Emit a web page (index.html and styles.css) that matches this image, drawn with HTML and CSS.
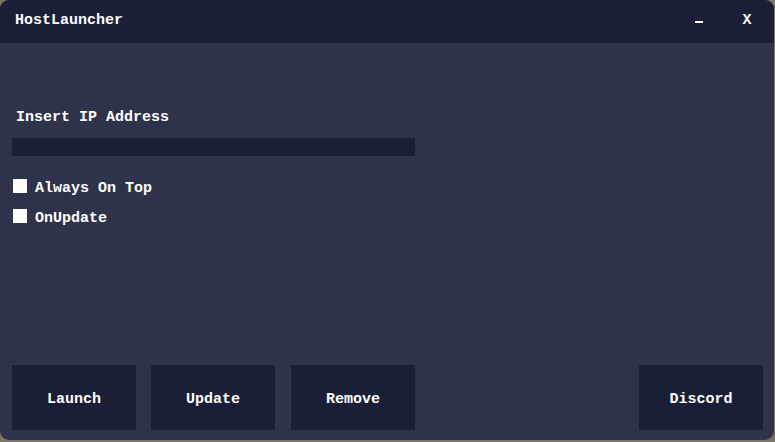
FILE: index.html
```html
<!DOCTYPE html>
<html>
<head>
<meta charset="utf-8">
<link rel="stylesheet" href="styles.css">
</head>
<body>
<div class="window">
  <div class="titlebar">
    <span class="title">HostLauncher</span>
    <div class="controls">
      <span class="min"></span>
      <span class="close">X</span>
    </div>
  </div>
  <div class="content">
    <div class="label">Insert IP Address</div>
    <div class="input"></div>
    <label class="check"><span class="box"></span><span class="text">Always On Top</span></label>
    <label class="check"><span class="box"></span><span class="text">OnUpdate</span></label>
  </div>
  <div class="buttons">
    <div class="btn">Launch</div>
    <div class="btn">Update</div>
    <div class="btn">Remove</div>
    <div class="btn discord">Discord</div>
  </div>
</div>
</body>
</html>
```
FILE: styles.css
```css
html, body {
  margin: 0;
  padding: 0;
  background: #7a7468;
  width: 775px;
  height: 442px;
  overflow: hidden;
}
.window {
  width: 774px;
  height: 440px;
  background: #2f3349;
  border-radius: 9px;
  overflow: hidden;
  display: flex;
  flex-direction: column;
  font-family: "Liberation Mono", "DejaVu Sans Mono", monospace;
  font-weight: bold;
  font-size: 15px;
  color: #ffffff;
}
.titlebar {
  height: 43px;
  background: #1b1e37;
  display: flex;
  align-items: center;
  justify-content: space-between;
  padding: 0 0 3px 15px;
  box-sizing: border-box;
}
.controls {
  display: flex;
  align-items: center;
}
.min {
  width: 8px;
  height: 2px;
  background: #ffffff;
  margin: 3px 39px 0 0;
}
.close {
  width: 10px;
  text-align: center;
  margin-right: 22px;
}
.content {
  padding: 66px 0 0 12px;
  display: flex;
  flex-direction: column;
}
.label {
  padding-left: 4px;
  line-height: 17px;
}
.input {
  margin-top: 12px;
  width: 403px;
  height: 18px;
  background: #1b1e37;
}
.check {
  display: flex;
  align-items: flex-start;
  height: 14px;
  margin-left: 1px;
}
.text {
  line-height: 19px;
}
.input + .check {
  margin-top: 23px;
}
.check + .check {
  margin-top: 16px;
}
.box {
  width: 14px;
  height: 14px;
  background: #ffffff;
  margin-right: 8px;
}
.buttons {
  margin-top: auto;
  display: flex;
  gap: 15px;
  padding: 0 11px 10px 12px;
}
.btn {
  width: 124px;
  height: 65px;
  box-sizing: border-box;
  padding-top: 3px;
  background: #1b1e37;
  display: flex;
  align-items: center;
  justify-content: center;
}
.btn:nth-child(3) {
  margin-left: 1px;
}
.discord {
  margin-left: auto;
}
```
